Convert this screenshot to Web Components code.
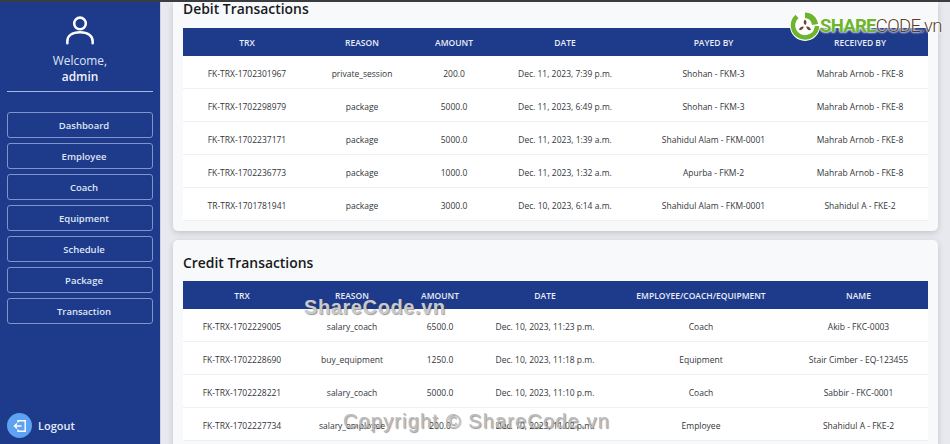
<!DOCTYPE html>
<html>
<head>
<meta charset="utf-8">
<title>Transactions</title>
<style>
    html, body { margin: 0; height: 100%; overflow: hidden; }
    body { font-family: "Open Sans", "Noto Sans", sans-serif; }
</style>
</head>
<body>
<gym-app>
    <gym-sidebar slot="side" user="admin">
        <nav-button>Dashboard</nav-button>
        <nav-button>Employee</nav-button>
        <nav-button>Coach</nav-button>
        <nav-button>Equipment</nav-button>
        <nav-button>Schedule</nav-button>
        <nav-button>Package</nav-button>
        <nav-button>Transaction</nav-button>
    </gym-sidebar>
    <tx-card class="debit">
        <span slot="title">Debit Transactions</span>
        <tx-table id="debit"></tx-table>
    </tx-card>
    <tx-card class="credit">
        <span slot="title">Credit Transactions</span>
        <tx-table id="credit"></tx-table>
    </tx-card>
    <share-marks slot="marks"></share-marks>
</gym-app>

<script>
// page shell: dark strip on top, sidebar on the left, scrolled content on the right
class GymApp extends HTMLElement {
    constructor() {
        super();
        this.attachShadow({ mode: 'open' });
        this.shadowRoot.innerHTML = `
            <style>
                :host { display: block; position: relative; width: 950px; height: 444px; overflow: hidden; background: #e7e9ee; }
                .strip { height: 2px; background: #3a3c40; }
                .body { display: flex; height: 442px; }
                main { flex: 1; min-width: 0; display: flex; flex-direction: column; gap: 9px; padding: 0 12px 0 12px; border-left: 1px solid #cbd2ea; overflow: hidden; }
            </style>
            <div class="strip"></div>
            <div class="body">
                <slot name="side"></slot>
                <main><slot></slot></main>
            </div>
            <slot name="marks"></slot>
        `;
    }
}

class GymSidebar extends HTMLElement {
    constructor() {
        super();
        this.attachShadow({ mode: 'open' });
        this.shadowRoot.innerHTML = `
            <style>
                :host { display: flex; flex-direction: column; flex: none; box-sizing: border-box; width: 160px; height: 442px; padding: 0 7px 6px; background: #1e3a8a; color: #fff; }
                .user { display: flex; flex-direction: column; align-items: center; padding-top: 13px; height: 76px; border-bottom: 1px solid #a9b8e0; text-align: center; color: #dbe4f7; font-size: 11.9px; line-height: 15px; }
                svg.avatar { display: block; width: 30px; height: 30px; margin-bottom: 8px; }
                b { margin-top: 1px; font-weight: 600; color: #eef2fb; }
                .links { display: flex; flex-direction: column; gap: 5px; margin-top: 20px; }
                .logout { display: flex; align-items: center; gap: 6px; margin-top: auto; font-size: 11px; font-weight: 600; color: #e6ecf9; }
                .circle { display: flex; align-items: center; justify-content: center; width: 25px; height: 25px; border-radius: 50%; background: #5ea3f2; }
            </style>
            <div class="user">
                <svg class="avatar" viewBox="0 0 32 32" fill="none" stroke="#fff" stroke-width="2.7">
                    <circle cx="16" cy="9" r="6.2"/>
                    <path d="M2.500 30v-2c0-6 5-9.500 13.500-9.500S29.500 22 29.500 28v2" stroke-linecap="round"/>
                </svg>
                <span>Welcome,</span>
                <b id="name"></b>
            </div>
            <div class="links"><slot></slot></div>
            <div class="logout">
                <span class="circle">
                    <svg width="14" height="14" viewBox="0 0 14 14" fill="none" stroke="#fff" stroke-width="1.4">
                        <path d="M5 3.500V1.700h7.200v10.600H5V10.500"/>
                        <path d="M8.500 7H1.500M4 4.500 1.500 7 4 9.500"/>
                    </svg>
                </span>
                <span>Logout</span>
            </div>
        `;
    }

    connectedCallback() {
        this.shadowRoot.querySelector('#name').textContent = this.getAttribute('user');
    }
}

class NavButton extends HTMLElement {
    constructor() {
        super();
        this.attachShadow({ mode: 'open' });
        this.shadowRoot.innerHTML = `
            <style>
                :host { display: flex; align-items: center; justify-content: center; box-sizing: border-box; height: 26px; padding-left: 8px; border: 1px solid #8094cb; border-radius: 3px; font-size: 9.5px; font-weight: 600; color: #dfe6f6; }
            </style>
            <slot></slot>
        `;
    }
}

class TxCard extends HTMLElement {
    constructor() {
        super();
        this.attachShadow({ mode: 'open' });
        this.shadowRoot.innerHTML = `
            <style>
                :host { display: block; flex: none; padding: 0 10px 10px; background: #f8f9fb; border-radius: 5px; box-shadow: 0 2px 6px rgba(0,0,0,.16); }
                :host(.debit) { border-radius: 0 0 5px 5px; }
                h2 { margin: 0; padding: 0; height: 26px; line-height: 14px; font-size: 13.9px; font-weight: 600; color: #17191c; }
                :host(.credit) h2 { height: 41px; line-height: 45px; }
            </style>
            <h2><slot name="title"></slot></h2>
            <slot></slot>
        `;
    }
}

class TxTable extends HTMLElement {
    constructor() {
        super();
        this.attachShadow({ mode: 'open' });
        this.shadowRoot.innerHTML = `
            <style>
                :host { display: block; background: #fff; }
                table { width: 745px; table-layout: fixed; border-collapse: collapse; font-size: 8.500px; color: #33363b; }
                th { height: 28px; padding: 0; background: #1e3a8a; color: #e8edf8; font-weight: 600; font-size: 8.500px; }
                td { height: 30px; padding: 2px 0 0; text-align: center; border-bottom: 1px solid #eff0f2; white-space: nowrap; }
            </style>
            <table><colgroup></colgroup><thead><tr></tr></thead><tbody></tbody></table>
        `;
    }

    // widths, head and rows are plain arrays, set from the page script
    setData({ widths, head, rows }) {
        const root = this.shadowRoot;
        root.querySelector('colgroup').innerHTML = widths.map(w => `<col style="width:${w}px">`).join('');
        root.querySelector('thead tr').innerHTML = head.map(h => `<th>${h}</th>`).join('');
        root.querySelector('tbody').innerHTML = rows
            .map(r => `<tr>${r.map(c => `<td>${c}</td>`).join('')}</tr>`)
            .join('');
    }
}

// the watermarks stamped over the screenshot
class ShareMarks extends HTMLElement {
    constructor() {
        super();
        this.attachShadow({ mode: 'open' });
        this.shadowRoot.innerHTML = `
            <style>
                :host { position: absolute; inset: 0; display: block; pointer-events: none; font-family: "Liberation Sans", sans-serif; }
                .logo { position: absolute; left: 790px; top: 11px; display: flex; align-items: center; height: 30px; }
                .logo svg { display: block; margin-right: 0; }
                .logo span { font-family: "Roboto", sans-serif; font-size: 18.5px; font-weight: 300; letter-spacing: -0.7px; color: #5b3d26; text-shadow: 0 0 2px #fff, 0 0 2px #fff, 0 0 3px #fff; white-space: nowrap; }
                .logo b { color: #6cb52d; font-weight: 700; }
                .mid, .copy { position: absolute; color: #c9cacd; font-weight: 700; white-space: nowrap; text-shadow: 1px 1px 1px rgba(70,70,70,.55); }
                .mid { left: 304px; top: 296px; font-size: 20px; letter-spacing: .6px; }
                .copy { left: 343px; top: 410px; font-size: 20px; font-weight: 400; letter-spacing: 1.15px; color: #bbbcbe; }
            </style>
            <div class="logo">
                <svg width="30" height="30" viewBox="0 0 30 30">
                    <circle cx="15" cy="15" r="15" fill="#fff"/>
                    <path d="M7 5.500A12 12 0 1 0 27 15" fill="none" stroke="#6cb52d" stroke-width="4.500"/>
                    <path d="M15 1.500A13 13 0 0 1 28 13l-6 1A8 8 0 0 0 15 7z" fill="#6cb52d"/>
                    <path d="M15 8.500c2 1.500 2 3.500.5 5.500-2-.8-2.500-3.500-.5-5.500zM9 19c.3-2.500 2.300-3.800 4.700-3.500 0 2.200-2 4.200-4.700 3.500zM21 19c-2.600.7-4.600-1-4.800-3.500 2.400-.4 4.300 1 4.800 3.500z" fill="#6b4a2e"/>
                </svg>
                <span><b>SHARE</b>CODE.vn</span>
            </div>
            <div class="mid">ShareCode.vn</div>
            <div class="copy">Copyright © ShareCode.vn</div>
        `;
    }
}

customElements.define('gym-app', GymApp);
customElements.define('gym-sidebar', GymSidebar);
customElements.define('nav-button', NavButton);
customElements.define('tx-card', TxCard);
customElements.define('tx-table', TxTable);
customElements.define('share-marks', ShareMarks);

document.querySelector('#debit').setData({
    widths: [128, 102, 82, 140, 157, 136],
    head: ['TRX', 'REASON', 'AMOUNT', 'DATE', 'PAYED BY', 'RECEIVED BY'],
    rows: [
        ['FK-TRX-1702301967', 'private_session', '200.0', 'Dec. 11, 2023, 7:39 p.m.', 'Shohan - FKM-3', 'Mahrab Arnob - FKE-8'],
        ['FK-TRX-1702298979', 'package', '5000.0', 'Dec. 11, 2023, 6:49 p.m.', 'Shohan - FKM-3', 'Mahrab Arnob - FKE-8'],
        ['FK-TRX-1702237171', 'package', '5000.0', 'Dec. 11, 2023, 1:39 a.m.', 'Shahidul Alam - FKM-0001', 'Mahrab Arnob - FKE-8'],
        ['FK-TRX-1702236773', 'package', '1000.0', 'Dec. 11, 2023, 1:32 a.m.', 'Apurba - FKM-2', 'Mahrab Arnob - FKE-8'],
        ['TR-TRX-1701781941', 'package', '3000.0', 'Dec. 10, 2023, 6:14 a.m.', 'Shahidul Alam - FKM-0001', 'Shahidul A - FKE-2'],
    ],
});

document.querySelector('#credit').setData({
    widths: [118, 102, 74, 136, 176, 139],
    head: ['TRX', 'REASON', 'AMOUNT', 'DATE', 'EMPLOYEE/COACH/EQUIPMENT', 'NAME'],
    rows: [
        ['FK-TRX-1702229005', 'salary_coach', '6500.0', 'Dec. 10, 2023, 11:23 p.m.', 'Coach', 'Akib - FKC-0003'],
        ['FK-TRX-1702228690', 'buy_equipment', '1250.0', 'Dec. 10, 2023, 11:18 p.m.', 'Equipment', 'Stair Cimber - EQ-123455'],
        ['FK-TRX-1702228221', 'salary_coach', '5000.0', 'Dec. 10, 2023, 11:10 p.m.', 'Coach', 'Sabbir - FKC-0001'],
        ['FK-TRX-1702227734', 'salary_employee', '200.0', 'Dec. 10, 2023, 11:02 p.m.', 'Employee', 'Shahidul A - FKE-2'],
    ],
});
</script>
</body>
</html>
